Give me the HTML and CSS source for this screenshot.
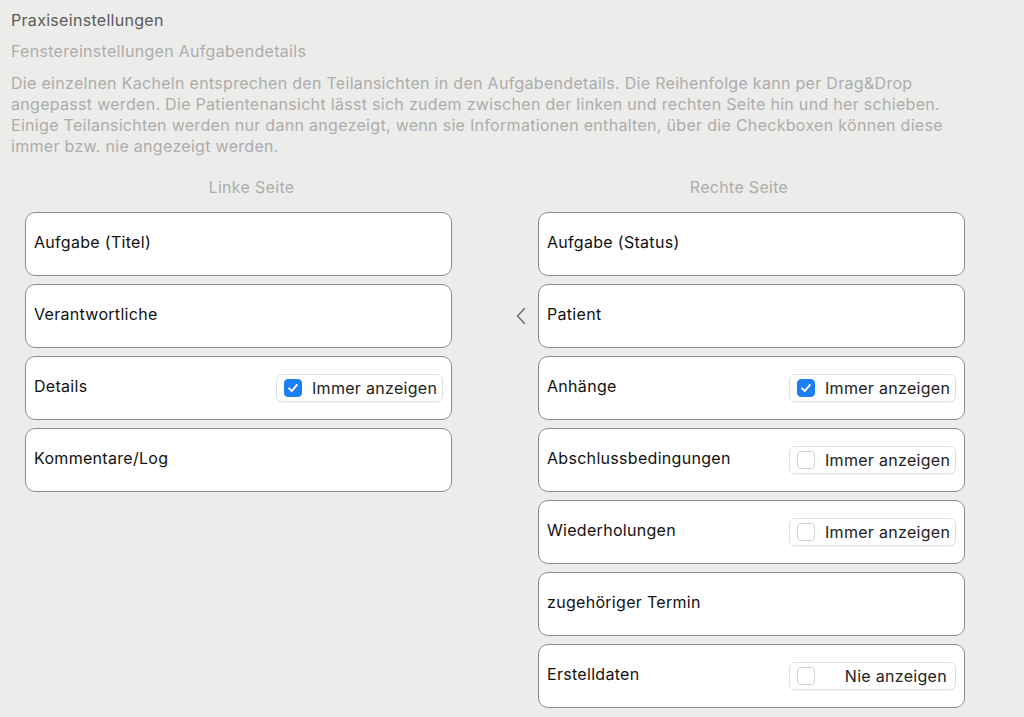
FILE: index.html
```html
<!DOCTYPE html>
<html lang="de">
<head>
<meta charset="utf-8">
<title>Praxiseinstellungen</title>
<link rel="stylesheet" href="styles.css">
</head>
<body>
<div class="page">
  <div class="crumb">Praxiseinstellungen</div>
  <div class="subtitle">Fenstereinstellungen Aufgabendetails</div>
  <p class="desc">Die einzelnen Kacheln entsprechen den Teilansichten in den Aufgabendetails. Die Reihenfolge kann per Drag&amp;Drop angepasst werden. Die Patientenansicht lässt sich zudem zwischen der linken und rechten Seite hin und her schieben. Einige Teilansichten werden nur dann angezeigt, wenn sie Informationen enthalten, über die Checkboxen können diese immer bzw. nie angezeigt werden.</p>

  <div class="columns">
    <div class="column">
      <div class="col-title left">Linke Seite</div>
      <div class="card"><span class="label">Aufgabe (Titel)</span></div>
      <div class="card"><span class="label">Verantwortliche</span></div>
      <div class="card">
        <span class="label">Details</span>
        <label class="pill"><span class="box checked"><svg viewBox="0 0 18 18" width="18" height="18"><path d="M4.6 9.4 L7.6 12.4 L13.4 5.6" fill="none" stroke="#fff" stroke-width="2.2" stroke-linecap="round" stroke-linejoin="round"/></svg></span><span class="pill-text">Immer anzeigen</span></label>
      </div>
      <div class="card"><span class="label">Kommentare/Log</span></div>
    </div>

    <div class="middle">
      <div class="mid-spacer"></div>
      <div class="mid-row">
        <svg class="chevron" viewBox="0 0 10 18" width="10" height="18"><path d="M8.5 1.5 L1.5 9 L8.5 16.5" fill="none" stroke="#6a6a6a" stroke-width="1.4" stroke-linecap="round" stroke-linejoin="round"/></svg>
      </div>
    </div>

    <div class="column">
      <div class="col-title right">Rechte Seite</div>
      <div class="card"><span class="label">Aufgabe (Status)</span></div>
      <div class="card"><span class="label">Patient</span></div>
      <div class="card">
        <span class="label">Anhänge</span>
        <label class="pill"><span class="box checked"><svg viewBox="0 0 18 18" width="18" height="18"><path d="M4.6 9.4 L7.6 12.4 L13.4 5.6" fill="none" stroke="#fff" stroke-width="2.2" stroke-linecap="round" stroke-linejoin="round"/></svg></span><span class="pill-text">Immer anzeigen</span></label>
      </div>
      <div class="card">
        <span class="label">Abschlussbedingungen</span>
        <label class="pill"><span class="box"></span><span class="pill-text">Immer anzeigen</span></label>
      </div>
      <div class="card">
        <span class="label">Wiederholungen</span>
        <label class="pill"><span class="box"></span><span class="pill-text">Immer anzeigen</span></label>
      </div>
      <div class="card"><span class="label">zugehöriger Termin</span></div>
      <div class="card">
        <span class="label">Erstelldaten</span>
        <label class="pill"><span class="box"></span><span class="pill-text end">Nie anzeigen</span></label>
      </div>
    </div>
  </div>
</div>
</body>
</html>
```

FILE: styles.css
```css
* { box-sizing: border-box; }
html, body {
  margin: 0;
  padding: 0;
  background: #ececeb;
  height: 100%;
  overflow: hidden;
}
body {
  font-family: Inter, "Liberation Sans", Arial, sans-serif;
  font-size: 16px;
  line-height: 21px;
  letter-spacing: 0.3px;
}
.page {
  padding: 10px 11px 0 11px;
}
.crumb {
  color: #5a5a5a;
  height: 21px;
}
.subtitle {
  color: #acacac;
  margin-top: 10px;
  height: 21px;
}
.desc {
  color: #acacac;
  margin: 11px 0 0 0;
  width: 952px;
}
.columns {
  display: flex;
  margin-top: 20px;
  padding-left: 14px;
}
.column {
  width: 427px;
  display: flex;
  flex-direction: column;
  gap: 8px;
}
.col-title {
  text-align: center;
  color: #adadad;
  height: 21px;
  margin-bottom: 6px;
}
.col-title.left { padding-left: 26px; }
.col-title.right { padding-right: 25px; }
.middle {
  width: 86px;
  display: flex;
  flex-direction: column;
}
.mid-spacer {
  height: 107px;
}
.mid-row {
  height: 64px;
  display: flex;
  align-items: center;
  justify-content: flex-end;
  padding-right: 12px;
}
.card {
  height: 64px;
  background: #fff;
  border: 1px solid #8c8c8c;
  border-radius: 10px;
  display: flex;
  align-items: center;
  justify-content: space-between;
  padding: 0 8px 0 8px;
}
.label {
  color: #111;
  margin-top: -4px;
}
.pill {
  width: 167px;
  height: 28px;
  border: 1px solid #e2e2e2;
  border-radius: 6px;
  background: #fff;
  display: flex;
  align-items: center;
  padding: 0 8px 0 7px;
  box-shadow: 0 0.5px 1px rgba(0,0,0,0.04);
}
.box {
  width: 18px;
  height: 18px;
  border-radius: 4px;
  border: 1px solid #d4d4d4;
  background: #fff;
  flex: none;
  display: flex;
  align-items: center;
  justify-content: center;
}
.box.checked {
  background: #1a7ef5;
  border-color: #1a7ef5;
}
.box.checked svg { display: block; }
.pill-text {
  color: #222;
  margin-left: 10px;
  flex: 1;
  white-space: nowrap;
}
.pill-text.end {
  text-align: right;
}
```
